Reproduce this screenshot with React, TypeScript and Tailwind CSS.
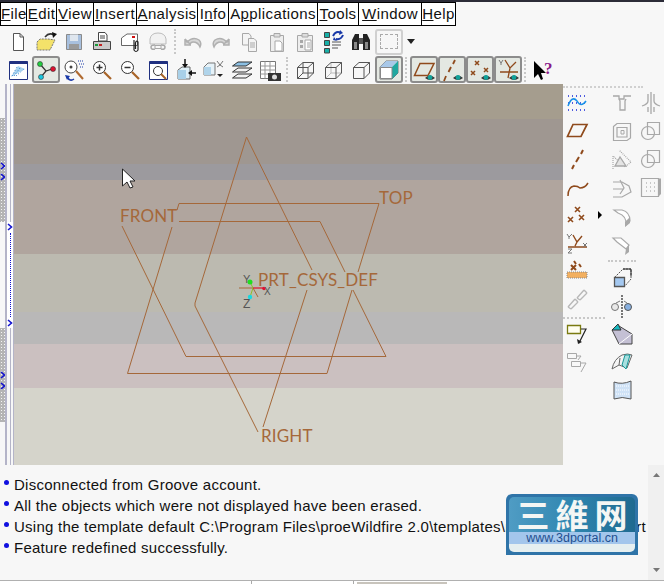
import React from "react";

const Svg = ({ children, w = 24, h = 24 }: { children?: React.ReactNode; w?: number; h?: number }) => (
  <svg width={w} height={h} viewBox={`0 0 ${w} ${h}`} fill="none" strokeWidth={1} className="block">
    {children}
  </svg>
);

const BR = "#8f4a1c";
const G = "#a8a8a8";

const Tool = ({ children, on }: { children?: React.ReactNode; on?: boolean }) => (
  <div className={on ? "w-7 h-[27px] flex items-center justify-center bg-[#e4e8e2] border-2 border-[#8c8c8c] rounded-[3px]" : "w-7 h-[27px] flex items-center justify-center"}>
    {children}
  </div>
);

const Sep = () => <div className="w-1 h-[25px] mx-0 border-l-2 border-dotted border-[#c8c8c8]" />;

const Eye = () => (
  <g>
    <path d="M13 20 Q18 15 23 20 Q18 24 13 20Z" fill="#333" />
    <circle cx="18" cy="19.5" r="2.4" fill="#12a29a" />
  </g>
);

const icons: Record<string, React.ReactNode> = {
  neww: <path d="M7.5 3.5H14L17.5 7V20.5H7.5Z M14 3.5V7H17.5" stroke="#555" fill="#fff" />,
  open: (
    <>
      <path d="M3 12L6 9H14L21 10L16 20H3Z" fill="#f4e26a" stroke="#777" strokeDasharray="2 1" />
      <path d="M11 7Q15 2 20 5" stroke="#333" strokeWidth={1.5} />
      <path d="M18 2L23 4L19 8Z" fill="#111" />
    </>
  ),
  save: (
    <>
      <path d="M4.5 4.5H19.5V19.5H4.5Z" fill="#a8c0de" stroke="#8a8a8a" />
      <path d="M8 4.5H16V11H8Z" fill="#dfe6ee" />
      <path d="M7 14H17V19H7Z" fill="#9a9a9a" />
    </>
  ),
  print: (
    <>
      <path d="M8.5 2.5H15L17 5V11H8.5Z" fill="#fff" stroke="#444" />
      <path d="M10 6H15M10 8H15" stroke="#444" />
      <path d="M3.5 11.5H20.5V19.5H3.5Z" fill="#c9c9c9" stroke="#444" />
      <path d="M5 15H8" stroke="#1a9a3a" strokeWidth={2} />
      <path d="M9 15H12" stroke="#c02020" strokeWidth={2} />
    </>
  ),
  mail: (
    <>
      <path d="M3.5 8L9 4H19.5V15.5H3.5Z" fill="#fff" stroke="#666" />
      <path d="M14 6H17V8H14Z" fill="#d01010" />
      <path d="M16 10V20Q18 23 20 20V12Q18 10 17.5 13V19" stroke="#222" strokeWidth={1.2} />
    </>
  ),
  mail2: (
    <>
      <path d="M4 9Q5 3 12 3Q19 3 20 9V14H4Z" stroke="#bcbcbc" fill="#f2f2f2" />
      <path d="M9 15Q5 15 5 17Q5 20 9 19M15 15Q19 15 19 17Q19 20 15 19" stroke={G} strokeWidth={1.5} />
      <path d="M9 15.5H15V18.5H9Z" stroke={G} />
    </>
  ),
  undo: <path d="M6 12Q12 6 18 10Q21 13 19 17Q17 12 12 12Q10 12 9 14L4 9Z M4 9V15H10" stroke="#b0b0b0" fill="#d8d8d8" strokeWidth={1.5} />,
  redo: <path d="M18 12Q12 6 6 10Q3 13 5 17Q7 12 12 12Q14 12 15 14L20 9Z M20 9V15H14" stroke="#b0b0b0" fill="#d8d8d8" strokeWidth={1.5} />,
  copy: (
    <>
      <path d="M5.5 3.5H12L14 6V15H5.5Z" stroke={G} fill="#f4f4f4" />
      <path d="M11.5 8.5H17L19.5 11V21.5H11.5Z" stroke={G} fill="#f4f4f4" />
      <path d="M13 13H18M13 15H18M13 17H18" stroke={G} />
    </>
  ),
  paste: (
    <>
      <path d="M5.5 5.5H18.5V21.5H5.5Z" stroke={G} fill="#eee" />
      <path d="M9 3.5H15V7H9Z" stroke={G} fill="#ddd" />
      <path d="M10 11H15L17 13V21H10Z" stroke={G} fill="#fff" />
    </>
  ),
  paste2: (
    <>
      <path d="M4.5 5.5H19.5V21.5H4.5Z" stroke={G} fill="#eee" />
      <path d="M9 3.5H15V7H9Z" stroke={G} fill="#ddd" />
      <path d="M12 10H18V20H12Z" fill="#fff" stroke={G} />
      <path d="M14 13H17M14 15H17M14 17H17" stroke={G} />
      <path d="M7 10H10V13H7ZM7 15H10V18H7Z" fill={G} />
    </>
  ),
  regen: (
    <>
      <path d="M3.5 2.5H8.5V7.5H3.5ZM3.5 10.5H8.5V15.5H3.5ZM3.5 18.5H8.5V23H3.5Z" stroke="#444" fill="#18b0a8" />
      <path d="M11 12H20M11 15H20M11 18H17" stroke="#555" />
      <path d="M12 6Q15 0 20 3M22 5Q20 10 15 9" stroke="#1838a8" strokeWidth={2} />
      <path d="M19 0L22 3L18 5ZM13 7L16 11L12 10Z" fill="#1838a8" />
    </>
  ),
  binoc: (
    <>
      <path d="M3 10L6 4H10V20H3ZM21 10L18 4H14V20H21Z" fill="#222" />
      <path d="M10 8H14V14H10Z" fill="#555" />
      <path d="M5 12H8V19H5ZM16 12H19V19H16Z" fill="#888" />
    </>
  ),
  wire1: <path d="M4.5 9.5L10 4.5H20.5V15L15 20.5H4.5ZM4.5 9.5H15V20.5M15 9.5L20.5 4.5M4.5 20.5L10 15V4.5M10 15H20.5" stroke="#555" />,
  wire2: (
    <>
      <path d="M10 15V4.5M4.5 20.5L10 15H20.5" stroke="#bbb" />
      <path d="M4.5 9.5L10 4.5H20.5V15L15 20.5H4.5ZM4.5 9.5H15V20.5M15 9.5L20.5 4.5" stroke="#555" />
    </>
  ),
  wire3: <path d="M4.5 9.5L10 4.5H20.5V15L15 20.5H4.5ZM4.5 9.5H15V20.5M15 9.5L20.5 4.5" stroke="#555" />,
  shade: (
    <>
      <path d="M3 9L9 3H21V15L15 21H3Z" fill="#fff" stroke="#777" />
      <path d="M3 9L9 3H21L15 9Z" fill="#a8c8e8" />
      <path d="M15 9L21 3V15L15 21Z" fill="#20a8a0" strokeDasharray="1 1" />
      <path d="M3.5 9.5H15V20.5H3.5Z" fill="#fff" stroke="#888" />
    </>
  ),
  refit: (
    <>
      <path d="M3.5 3.5H21.5V21.5H3.5Z" fill="#fff" stroke="#203080" />
      <path d="M3.5 3.5H21.5V6H3.5Z" fill="#203080" />
      <path d="M5 19L12 8L19 11Z" fill="#a8d4f0" />
      <path d="M6 18L11 9M8 18L14 10M10 18L18 11" stroke="#2878c8" strokeDasharray="1 2" />
    </>
  ),
  tree: (
    <>
      <path d="M6 6L12 13L18 11M12 13L7 19" stroke="#333" strokeWidth={1.2} />
      <circle cx="6" cy="6" r="2.5" fill="#22d040" stroke="#333" strokeWidth={0.6} />
      <circle cx="19" cy="11" r="2.5" fill="#e01030" stroke="#333" strokeWidth={0.6} />
      <circle cx="7" cy="19" r="2.5" fill="#18c8e0" stroke="#333" strokeWidth={0.6} />
    </>
  ),
  spin: (
    <>
      <circle cx="9" cy="9" r="6" stroke="#444" fill="#fff" />
      <circle cx="9" cy="9" r="1.5" fill="#444" />
      <path d="M14 13L21 21" stroke="#b06a30" strokeWidth={2} />
      <path d="M16 3H21M17 6H22M18 9H22" stroke="#1838a8" strokeDasharray="1 1" />
      <path d="M5 19Q8 24 12 21" stroke="#1838a8" strokeWidth={1.5} />
      <path d="M3 17L8 18L5 22Z" fill="#1838a8" />
    </>
  ),
  zoomin: (
    <>
      <circle cx="9.5" cy="9.5" r="6" stroke="#333" fill="#fff" />
      <path d="M6.5 9.5H12.5M9.5 6.5V12.5" stroke="#333" strokeWidth={1.5} />
      <path d="M14 14L21 21" stroke="#a86428" strokeWidth={2.2} />
    </>
  ),
  zoomout: (
    <>
      <circle cx="9.5" cy="9.5" r="6" stroke="#333" fill="#fff" />
      <path d="M6.5 9.5H12.5" stroke="#333" strokeWidth={1.5} />
      <path d="M14 14L21 21" stroke="#a86428" strokeWidth={2.2} />
    </>
  ),
  refit2: (
    <>
      <path d="M3.5 3.5H21.5V21.5H3.5Z" fill="#fff" stroke="#203080" />
      <path d="M3.5 3.5H21.5V6H3.5Z" fill="#203080" />
      <circle cx="12" cy="13" r="4.5" stroke="#333" />
      <path d="M15 16L20 21" stroke="#a86428" strokeWidth={2} />
    </>
  ),
  orient: (
    <>
      <path d="M4 12L8 9H16V21H4Z" fill="#dff0f8" stroke="#666" />
      <path d="M4 12H12V21H4Z" fill="#a8d0e8" />
      <path d="M11 1V9" stroke="#111" strokeWidth={1.5} />
      <path d="M8 6L11 10L14 6Z" fill="#111" />
      <path d="M22 15H15" stroke="#111" strokeWidth={1.5} />
      <path d="M18 12L14 15L18 18Z" fill="#111" />
    </>
  ),
  saved: (
    <>
      <path d="M2 9L6 5H13V17H2Z" fill="#e6f2f8" stroke="#777" />
      <path d="M2 9H9V17H2Z" fill="#b0d4ea" />
      <path d="M15 3L18 7L21 3M15 9L18 7L21 9" stroke="#555" strokeWidth={0.8} />
      <path d="M15 16H21L18 19Z" fill="#222" />
    </>
  ),
  layers: (
    <>
      <path d="M2.5 8L8 4H22L16 8Z" fill="#8cc0e4" stroke="#333" />
      <path d="M2.5 14L8 10H22L16 14Z" fill="#f2f2f2" stroke="#333" />
      <path d="M2.5 20L8 16H22L16 20Z" fill="#f2f2f2" stroke="#333" />
    </>
  ),
  table: (
    <>
      <path d="M2.5 3.5H17.5V20.5H2.5Z" fill="#fff" stroke="#777" />
      <path d="M2.5 8H17.5M2.5 12H17.5M2.5 16H17.5M7 3.5V20.5M12 3.5V20.5" stroke="#999" />
      <path d="M10 15H23V23H10Z" fill="#333" />
      <circle cx="16.5" cy="19" r="2.5" fill="#ddd" />
    </>
  ),
  dPlane: (
    <>
      <path d="M8 5.5H22L16 17.5H2.5Z" stroke={BR} strokeWidth={1.5} />
      <Eye />
    </>
  ),
  dAxis: (
    <>
      <path d="M15 2L13 6M11 9L8.5 14M6 18L4 23" stroke={BR} strokeWidth={1.8} />
      <Eye />
    </>
  ),
  dPts: (
    <>
      <path d="M7 3L11 7M11 3L7 7M3 13L7 17M7 13L3 17M16 10L20 14M20 10L16 14" stroke={BR} strokeWidth={1.5} />
      <Eye />
    </>
  ),
  dCsys: (
    <>
      <path d="M9 2L14 10L20 4M14 10L12 20M4 14H22" stroke={BR} strokeWidth={1.3} />
      <path d="M3 2L5 5L7 2M5 5V7" stroke="#777" />
      <Eye />
    </>
  ),
  help: (
    <>
      <path d="M3 3V20L7 16L10 22L12 21L10 15H15Z" fill="#000" />
      <text x="13" y="16" fontSize="17" fontWeight="bold" fontFamily="'Liberation Serif',serif" fill="#8a1a8a">?</text>
    </>
  ),
  sketch: (
    <>
      <path d="M3 5H22M3 19H22M3 12H22" stroke="#1828d8" strokeDasharray="1 3" strokeWidth={1.3} />
      <path d="M3 15Q7 4 12 10Q16 17 21 10" stroke="#1890e8" strokeWidth={1.5} />
    </>
  ),
  plane: <path d="M8 5.5H22L16 17.5H2.5Z" stroke={BR} strokeWidth={1.7} />,
  axis: <path d="M18 3L16 7M14 10L11 15M9 18L7 22" stroke={BR} strokeWidth={2} />,
  curve: <path d="M3 21Q3 12 9 11Q13 11 15 13Q20 13 23 8" stroke={BR} strokeWidth={1.5} />,
  points: <path d="M10 4L15 9M15 4L10 9M3 14L8 19M8 14L3 19M14 12L19 17M19 12L14 17" stroke={BR} strokeWidth={1.6} />,
  csys: (
    <>
      <path d="M8 4L12 11L17 5M12 11L10 15M3 16H22" stroke={BR} strokeWidth={1.4} />
      <path d="M2 3L4 6L7 3M4 6V8M18 12L22 16M22 12L18 16M3 18H7L3 22H7" stroke="#777" />
    </>
  ),
  grid: (
    <>
      <path d="M9 2L11 5M14 5L16 8" stroke={BR} strokeWidth={2} />
      <path d="M6 6L11 11M11 6L6 11" stroke={BR} strokeWidth={2} />
      <path d="M2 13H22V19H2Z" fill="#f3b060" stroke="#888" strokeDasharray="1 1" />
    </>
  ),
  link: (
    <>
      <path d="M3 20L10 12M6 22L13 15M3 20L6 22M10 12L13 15" stroke="#b8b8b8" strokeWidth={1.4} />
      <path d="M12 11L19 3M15 13L22 6M19 3L22 6M12 11L15 13" stroke="#b8b8b8" strokeWidth={1.4} />
    </>
  ),
  note: (
    <>
      <path d="M2.5 2.5H15.5V10.5H2.5Z" fill="#fffef0" stroke="#7a7a10" strokeWidth={1.3} />
      <path d="M16 6H21L14 20" stroke="#222" strokeWidth={1.2} />
      <path d="M12 16L13 21L17 19Z" fill="#222" />
    </>
  ),
  notes: (
    <>
      <path d="M2.5 2.5H11.5V7.5H2.5ZM6.5 10.5H15.5V15.5H6.5Z" fill="#f8f8f8" stroke={G} />
      <path d="M12 5H16L13 9M16 12H21L16 21" stroke={G} />
    </>
  ),
  hole: <path d="M3 4H9V7H14V4H21M9 7L10 9V18H15V9L16 7" stroke={G} fill="none" strokeWidth={1.3} />,
  mirror: <path d="M12 1V23M9 3V10Q9 13 3 15M15 3V10Q15 13 21 15M9 16V21M15 16V21" stroke={G} strokeWidth={1.3} />,
  shell: (
    <>
      <path d="M3.5 6.5L7 3.5H20.5V18L17 20.5H3.5Z" stroke={G} strokeWidth={1.2} />
      <path d="M7 7.5H17V17H7Z" stroke={G} strokeWidth={1.2} />
      <path d="M11 10.5H14V14H11Z" stroke={G} />
    </>
  ),
  boolA: (
    <>
      <circle cx="9" cy="14" r="6.5" stroke={G} strokeWidth={1.2} />
      <path d="M8.5 3.5H20.5V15.5H8.5Z" stroke={G} strokeWidth={1.2} />
    </>
  ),
  trim: (
    <>
      <path d="M3 21V8L15 19L21 14L9 2" stroke={G} strokeDasharray="1 1" strokeWidth={1.2} />
      <path d="M5 18L10 9L16 18Z" stroke={G} strokeWidth={1.3} fill="#e4e4e4" />
    </>
  ),
  blend: (
    <>
      <path d="M3 6H12L19 10L21 16L12 21H3" stroke={G} strokeWidth={1.2} />
      <path d="M10 4L14 12L10 18M3 13H14" stroke={G} strokeWidth={1.2} />
    </>
  ),
  surf: (
    <>
      <path d="M2.5 3.5H19.5V21.5H2.5Z" stroke={G} strokeWidth={1.2} />
      <path d="M19.5 3.5H22V19L19.5 21.5Z" fill={G} />
      <path d="M7 8H17M7 12H17M7 16H17" stroke="#999" strokeDasharray="1 3" />
    </>
  ),
  roundA: (
    <>
      <path d="M4 6H12Q20 8 20 17L16 21Q17 12 8 9Z" stroke={G} strokeWidth={1.2} fill="#fff" />
      <path d="M20 13V19L15 23V18Z" fill="#a8a8a8" />
    </>
  ),
  chamfer: (
    <>
      <path d="M3 6H11L19 13L16 17L7 10Z" stroke={G} strokeWidth={1.2} fill="#fff" />
      <path d="M19 13V20L15 23L16 17Z" fill="#a8a8a8" />
    </>
  ),
  extrude: (
    <>
      <path d="M4.5 11.5H14.5V20.5H4.5Z" fill="#a4c8f0" stroke="#555" strokeWidth={1.3} />
      <path d="M4.5 11.5L13 3H21V13L14.5 20.5" stroke="#555" strokeDasharray="2 1" />
      <path d="M13 3H21V10" stroke="#222" />
    </>
  ),
  revolve: (
    <>
      <path d="M12 1V24" stroke="#222" strokeDasharray="2 1" strokeWidth={1.2} />
      <circle cx="5" cy="13" r="3.5" fill="#e8e8e8" stroke="#777" />
      <circle cx="18" cy="13" r="3.5" fill="#88b0e0" stroke="#555" />
      <path d="M6 9L10 7M14 7L17 9" stroke="#777" />
    </>
  ),
  sweep: (
    <>
      <path d="M2 8L9 4L22 12V22H9Z" fill="#c4c0d4" stroke="#444" />
      <path d="M2 8L8 2L11 8Z" fill="#18b8c0" stroke="#333" />
      <path d="M9 22L22 12" stroke="#fff" />
    </>
  ),
  blendS: (
    <>
      <path d="M2 19Q4 9 12 5Q18 3 22 5L17 18L9 15L2 19Z" fill="#f4f4f4" stroke="#666" />
      <path d="M12 15L15 5L20 5L16 19Z" fill="#a8e0e0" stroke="#189898" />
      <path d="M9 15L10 8" stroke="#666" />
    </>
  ),
  boundary: (
    <>
      <path d="M4 4Q12 7 21 3V21Q12 18 4 21Z" fill="#cfe2f6" stroke="#555" />
      <path d="M6 8H19M6 12H19M6 16H19" stroke="#fff" strokeDasharray="1 1" />
    </>
  ),
};

const I = ({ n }: { n: keyof typeof icons }) => <Svg>{icons[n]}</Svg>;

const Menu = () => {
  const items: [string, React.ReactNode, string][] = [
    ["File", <><u>F</u>ile</>, "w-[27px]"],
    ["Edit", <><u>E</u>dit</>, "w-[31px]"],
    ["View", <><u>V</u>iew</>, "w-[38px]"],
    ["Insert", <><u>I</u>nsert</>, "w-[44px]"],
    ["Analysis", <><u>A</u>nalysis</>, "w-[62px]"],
    ["Info", <>I<u>n</u>fo</>, "w-[32px]"],
    ["Applications", <>A<u>p</u>plications</>, "w-[90px]"],
    ["Tools", <><u>T</u>ools</>, "w-[42px]"],
    ["Window", <><u>W</u>indow</>, "w-[64px]"],
    ["Help", <><u>H</u>elp</>, "w-[35px]"],
  ];
  return (
    <div className="flex h-6 mt-[2px] items-stretch">
      {items.map(([k, c, w]) => (
        <div key={k} className={`${w} border border-black bg-white text-[15px] leading-[22px] text-center tracking-[0.4px] text-[#111] -ml-px first:ml-0 whitespace-nowrap`}>
          {c}
        </div>
      ))}
    </div>
  );
};

const Chevron = () => (
  <svg width="6" height="8" viewBox="0 0 6 8" className="block" fill="none">
    <path d="M1 1L4.5 4L1 7" stroke="#1010d0" strokeWidth={1.6} />
  </svg>
);

const Stipple = ({ children }: { children?: React.ReactNode }) => (
  <div className="h-full w-[5px] bg-[#b4b4b4] bg-[radial-gradient(#f4f4f4_0.7px,transparent_0.8px)] bg-[length:3px_3px] flex flex-col items-center">
    {children}
  </div>
);

const LeftStrip = () => (
  <div className="w-[14px] h-[381px] relative flex shrink-0">
    <div className="w-[5px] flex flex-col pt-[34px]">
      <div className="h-[104px]">
        <Stipple>
          <div className="mt-[44px]"><Chevron /></div>
          <div className="mt-[3px]"><Chevron /></div>
        </Stipple>
      </div>
      <div className="h-[106px]" />
      <div className="h-[94px]">
        <Stipple>
          <div className="mt-[43px]"><Chevron /></div>
          <div className="mt-[3px]"><Chevron /></div>
        </Stipple>
      </div>
    </div>
    <div className="w-[9px] relative">
      <div className="absolute inset-y-0 left-0 w-[2px] bg-[#b4b4c8]" />
      <div className="absolute inset-y-0 left-[5px] w-px bg-[#b4b4c8]" />
      <div className="absolute inset-y-0 left-[8px] w-px bg-[#b4b4c8]" />
      <div className="absolute left-[2px] top-[138px] h-[106px] w-[6px] bg-white flex flex-col items-center py-[1px]">
        <Chevron />
        <div className="flex-1 border-l border-dotted border-[#1010d0] my-[2px]" />
        <Chevron />
      </div>
    </div>
  </div>
);

const Label = ({ pos, children }: { pos: string; children: React.ReactNode }) => (
  <div className={`absolute ${pos} text-[17px] leading-5 tracking-[0.15px] text-[#a5683a] font-['Lato',sans-serif] whitespace-nowrap`}>{children}</div>
);

const Canvas = () => (
  <div className="relative w-[549px] h-[381px] overflow-hidden flex flex-col shrink-0">
    <div className="h-[35px] bg-[#a59d8e]" />
    <div className="h-[45px] bg-[#9f9791]" />
    <div className="h-[16px] bg-[#9c9a9e]" />
    <div className="h-[74px] bg-[#b0a59e]" />
    <div className="h-[58px] bg-[#bcbab0]" />
    <div className="h-[32px] bg-[#b9b8b8]" />
    <div className="h-[44px] bg-[#cbc0c0]" />
    <div className="flex-1 bg-[#d5d4cb]" />
    <svg width="549" height="381" viewBox="14 84 549 381" fill="none" className="absolute left-0 top-0">
      <g stroke="#a5683a" strokeWidth={1}>
        <path d="M312 270L246.5 137L195 303L195 306L258 432" />
        <path d="M307 290L263 427" />
        <path d="M177 210L179 203.5H379L358 272" />
        <path d="M352 290L327 373.5H127.5L172 227" />
        <path d="M179 221.5H320L345 272" />
        <path d="M353 290L386 356.5H186L122 226" />
        <path d="M239 288H253L258 297" />
      </g>
      <path d="M253 288L250 282M253 288L250 297" stroke="#8cc028" strokeWidth={1} />
      <path d="M253 288H264" stroke="#e01030" strokeWidth={1.2} />
      <circle cx="250" cy="282" r="2.5" fill="#20e020" />
      <circle cx="264" cy="288.5" r="1.8" fill="#e01030" />
      <circle cx="250" cy="297" r="2.2" fill="#18d8e0" />
      <path d="M122.5 169V186L127 182L130 188L133 187L130 181L135 181Z" fill="#fff" stroke="#222" strokeWidth={1} />
    </svg>
    <Label pos="left-[106px] top-[122px]">FRONT</Label>
    <Label pos="left-[365px] top-[104px]">TOP</Label>
    <Label pos="left-[244px] top-[186px]">PRT_CSYS_DEF</Label>
    <Label pos="left-[247px] top-[342px]">RIGHT</Label>
    <div className="absolute left-[229px] top-[189px] text-[11px] leading-3 text-[#555] font-['Liberation_Sans',sans-serif]">Y</div>
    <div className="absolute left-[250px] top-[202px] text-[10px] leading-3 text-[#555] font-['Liberation_Sans',sans-serif]">X</div>
    <div className="absolute left-[229px] top-[214px] text-[12px] leading-3 text-[#555] font-['Liberation_Sans',sans-serif]">Z</div>
  </div>
);

const Cell = ({ n }: { n: keyof typeof icons }) => (
  <div className="w-7 h-7 flex items-center justify-center">
    <I n={n} />
  </div>
);

const RightPanel = () => (
  <div className="flex-1 flex">
    <div className="w-7">
      <div className="w-[80px] mt-[2px] mb-[1px] border-t-2 border-dotted border-[#d0d0d0]" />
      <Cell n="sketch" />
      <Cell n="plane" />
      <Cell n="axis" />
      <Cell n="curve" />
      <Cell n="points" />
      <Cell n="csys" />
      <Cell n="grid" />
      <Cell n="link" />
      <div className="w-[42px] mt-[4px] mb-[2px] border-t-2 border-dotted border-[#c8c8c8]" />
      <Cell n="note" />
      <Cell n="notes" />
    </div>
    <div className="w-[17px] pt-[127px] flex justify-center">
      <svg width="6" height="8" viewBox="0 0 6 8"><path d="M1 0L5 4L1 8Z" fill="#000" /></svg>
    </div>
    <div className="w-7 pt-[6px]">
      <Cell n="hole" />
      <Cell n="shell" />
      <Cell n="trim" />
      <Cell n="blend" />
      <Cell n="roundA" />
      <Cell n="chamfer" />
      <div className="w-7 mt-[2px] mb-[2px] border-t-2 border-dotted border-[#c8c8c8]" />
      <Cell n="extrude" />
      <Cell n="revolve" />
      <Cell n="sweep" />
      <Cell n="blendS" />
      <Cell n="boundary" />
    </div>
    <div className="w-7 pt-[5px] ml-px">
      <Cell n="mirror" />
      <Cell n="boolA" />
      <Cell n="boolA" />
      <Cell n="surf" />
    </div>
  </div>
);

const Line = ({ children }: { children?: React.ReactNode }) => (
  <div className="flex items-start h-[21px] leading-[21px] whitespace-nowrap">
    <span className="w-[5px] h-[5px] rounded-full bg-[#1010e0] mt-[6px] ml-[4px] mr-[5px] shrink-0" />
    <span>{children}</span>
  </div>
);

const Logo = () => (
  <div className="absolute left-[506px] top-[29px] w-[132px] h-[61px] bg-[#2f74a8] rounded-t-[6px] p-[3px] flex flex-col">
    <div className="flex-1 rounded-[5px] overflow-hidden flex flex-col">
      <div className="h-[35px] bg-gradient-to-r from-[#4f9cc4] via-[#2f86b0] to-[#1f6a90] flex justify-center">
        <span className="text-[33px] leading-[35px] font-bold text-[#f4f6f4] tracking-[6px] pl-[6px] font-['Noto_Sans_CJK_SC',sans-serif] whitespace-nowrap">三維网</span>
      </div>
      <div className="h-[12px] bg-[#a3c6ec] text-[12.5px] leading-[12px] font-medium text-[#1f4f90] font-['Liberation_Sans',sans-serif] text-center whitespace-nowrap">www.3dportal.cn</div>
      <div className="flex-1 bg-[#e6eff0]" />
    </div>
  </div>
);

export default function App() {
  return (
    <div className="w-[664px] h-[584px] overflow-hidden bg-[#f7f7f7] font-['Liberation_Sans',sans-serif] flex flex-col">
      <div className="h-[2px] bg-[#2c2c38] -mb-[2px]" />
      <Menu />
      <div className="flex items-center pl-1 h-[28px] mt-[2px]">
        <Tool><I n="neww" /></Tool>
        <Tool><I n="open" /></Tool>
        <Tool><I n="save" /></Tool>
        <Tool><I n="print" /></Tool>
        <Tool><I n="mail" /></Tool>
        <Tool><I n="mail2" /></Tool>
        <div className="w-[7px] flex justify-center"><Sep /></div>
        <Tool><I n="undo" /></Tool>
        <Tool><I n="redo" /></Tool>
        <Tool><I n="copy" /></Tool>
        <Tool><I n="paste" /></Tool>
        <Tool><I n="paste2" /></Tool>
        <Tool><I n="regen" /></Tool>
        <Tool><I n="binoc" /></Tool>
        <div className="w-[28px] h-[26px] border-2 border-[#d0d0d0] rounded-[3px] flex items-center justify-center">
          <div className="w-[18px] h-[15px] border border-dashed border-[#aaa]" />
        </div>
        <svg width="8" height="5" viewBox="0 0 8 5" className="ml-[4px]"><path d="M0 0H8L4 5Z" fill="#222" /></svg>
      </div>
      <div className="flex items-center pl-1 h-[28px]">
        <Tool><I n="refit" /></Tool>
        <Tool on><I n="tree" /></Tool>
        <Tool><I n="spin" /></Tool>
        <Tool><I n="zoomin" /></Tool>
        <Tool><I n="zoomout" /></Tool>
        <Tool><I n="refit2" /></Tool>
        <Tool><I n="orient" /></Tool>
        <Tool><I n="saved" /></Tool>
        <Tool><I n="layers" /></Tool>
        <Tool><I n="table" /></Tool>
        <div className="w-[7px] flex justify-center"><Sep /></div>
        <Tool><I n="wire1" /></Tool>
        <Tool><I n="wire2" /></Tool>
        <Tool><I n="wire3" /></Tool>
        <Tool on><I n="shade" /></Tool>
        <div className="w-[7px] flex justify-center"><Sep /></div>
        <Tool on><I n="dPlane" /></Tool>
        <Tool on><I n="dAxis" /></Tool>
        <Tool on><I n="dPts" /></Tool>
        <Tool on><I n="dCsys" /></Tool>
        <div className="w-[7px] flex justify-center"><Sep /></div>
        <Tool><I n="help" /></Tool>
      </div>
      <div className="flex h-[381px]">
        <LeftStrip />
        <Canvas />
        <RightPanel />
      </div>
      <div className="relative h-[116px] flex">
        <div className="flex-1 pt-[9px] text-[15px] text-[#111] tracking-[0.25px] overflow-hidden">
          <Line>Disconnected from Groove account.</Line>
          <Line>All the objects which were not displayed have been erased.</Line>
          <Line>Using the template default C:\Program Files\proeWildfire 2.0\templates\mmns_part_solid.prt</Line>
          <Line>Feature redefined successfully.</Line>
        </div>
        <div className="w-4 bg-[#f0f0f0] flex flex-col items-center justify-between py-[8px]">
          <svg width="7" height="4" viewBox="0 0 7 4"><path d="M3.5 0L7 4H0Z" fill="#777" /></svg>
          <svg width="7" height="4" viewBox="0 0 7 4"><path d="M0 0H7L3.5 4Z" fill="#777" /></svg>
        </div>
        <Logo />
      </div>
      <div className="flex-1 border-t border-[#b0b0b0] bg-white flex">
        <div className="w-[252px] border-r border-[#aaa]" />
        <div className="w-[102px] border-r border-[#aaa]" />
        <div className="ml-[3px] w-[90px] h-[2px] mt-[1px] bg-[#c8c4bc]" />
      </div>
    </div>
  );
}
